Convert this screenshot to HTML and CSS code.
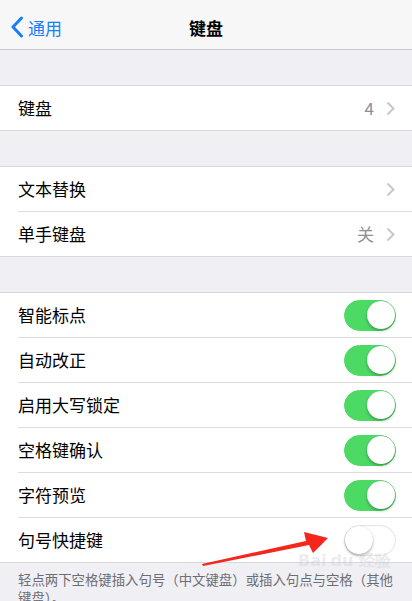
FILE: index.html
```html
<!DOCTYPE html>
<html>
<head>
  <meta charset="utf-8">
  <title>键盘</title>
  <link rel="stylesheet" href="styles.css">
</head>
<body>
  <div class="navbar">
    <div class="back">
      <svg class="back-icon" width="14" height="22" viewBox="0 0 14 22"><path d="M11.5 2 L3 11 L11.5 20" fill="none" stroke="#157efb" stroke-width="3" stroke-linecap="round" stroke-linejoin="round"/></svg>
      <span>通用</span>
    </div>
    <div class="title">键盘</div>
  </div>

  <div class="group">
    <div class="row"><div class="cell"><span class="label">键盘</span><span class="detail">4</span><svg class="chev" width="9" height="15" viewBox="0 0 9 15"><path d="M1.5 1.5 L7.5 7.5 L1.5 13.5" fill="none" stroke="#c7c7cc" stroke-width="2"/></svg></div></div>
  </div>

  <div class="group">
    <div class="row"><div class="cell"><span class="label">文本替换</span><svg class="chev" width="9" height="15" viewBox="0 0 9 15"><path d="M1.5 1.5 L7.5 7.5 L1.5 13.5" fill="none" stroke="#c7c7cc" stroke-width="2"/></svg></div></div>
    <div class="row"><div class="cell"><span class="label">单手键盘</span><span class="detail">关</span><svg class="chev" width="9" height="15" viewBox="0 0 9 15"><path d="M1.5 1.5 L7.5 7.5 L1.5 13.5" fill="none" stroke="#c7c7cc" stroke-width="2"/></svg></div></div>
  </div>

  <div class="group">
    <div class="row"><div class="cell"><span class="label">智能标点</span><span class="switch on"><span class="knob"></span></span></div></div>
    <div class="row"><div class="cell"><span class="label">自动改正</span><span class="switch on"><span class="knob"></span></span></div></div>
    <div class="row"><div class="cell"><span class="label">启用大写锁定</span><span class="switch on"><span class="knob"></span></span></div></div>
    <div class="row"><div class="cell"><span class="label">空格键确认</span><span class="switch on"><span class="knob"></span></span></div></div>
    <div class="row"><div class="cell"><span class="label">字符预览</span><span class="switch on"><span class="knob"></span></span></div></div>
    <div class="row"><div class="cell"><span class="label">句号快捷键</span><span class="switch"><span class="knob"></span></span></div></div>
  </div>

  <div class="footer">轻点两下空格键插入句号（中文键盘）或插入句点与空格（其他键盘）。</div>

  <div class="watermark">Bai<span class="du">du</span> 经验</div>

  <svg class="arrow" width="412" height="601" viewBox="0 0 412 601">
    <polygon points="202,564 306,541 304,532 328,538 313,553 309,545 203,566" fill="#f5261c"/>
  </svg>
</body>
</html>
```

FILE: styles.css
```css
body {
  margin: 0;
  background-color: #efeff4;
  font-family: "Noto Sans CJK SC", "Noto Sans", sans-serif;
  color: #000;
  width: 412px;
  height: 601px;
  overflow: hidden;
  position: relative;
}
.navbar {
  height: 49px;
  background-color: #f7f7f8;
  border-bottom: 1px solid #c8c7cc;
  display: flex;
  align-items: center;
  justify-content: center;
  position: relative;
}
.back {
  position: absolute;
  left: 10px;
  top: 0;
  height: 54px;
  display: flex;
  align-items: center;
  gap: 4px;
  color: #157efb;
  font-size: 17px;
}
.title {
  font-size: 17px;
  font-weight: bold;
  padding-top: 5px;
}
.group {
  margin-top: 35px;
  background-color: #fff;
  border-top: 1px solid #d8d8dc;
  border-bottom: 1px solid #d8d8dc;
}
.row {
  padding-left: 18px;
}
.cell {
  height: 44px;
  display: flex;
  align-items: center;
  padding-right: 17px;
  border-bottom: 1px solid #dcdce0;
}
.row:last-child .cell {
  border-bottom: none;
}
.label {
  flex: 1;
  font-size: 17px;
  padding-bottom: 2px;
}
.detail {
  font-size: 17px;
  color: #8e8e93;
  margin-right: 12px;
  padding-bottom: 2px;
}
.chev {
  display: block;
}
.switch {
  width: 52px;
  height: 31px;
  border-radius: 16px;
  box-sizing: border-box;
  border: 1.5px solid #e3e3e6;
  background-color: #fff;
  display: flex;
  align-items: center;
  justify-content: flex-start;
  margin-right: -1px;
}
.switch.on {
  background-color: #4cd964;
  border-color: #4cd964;
  justify-content: flex-end;
}
.knob {
  width: 28px;
  height: 28px;
  border-radius: 50%;
  background-color: #fff;
  box-shadow: 0 2px 3px rgba(0, 0, 0, 0.25), 0 0 1px rgba(0, 0, 0, 0.2);
}
.footer {
  padding: 7px 14px 0 18px;
  font-size: 13.4px;
  line-height: 18px;
  color: #6d6d72;
}
.watermark {
  position: absolute;
  left: 298px;
  top: 553px;
  white-space: nowrap;
  font-family: "DejaVu Sans", sans-serif;
  font-size: 16px;
  line-height: 16px;
  font-weight: bold;
  color: rgba(205, 205, 210, 0.4);
}
.du {
  margin-left: 4px;
}
.arrow {
  position: absolute;
  left: 0;
  top: 0;
}
```
